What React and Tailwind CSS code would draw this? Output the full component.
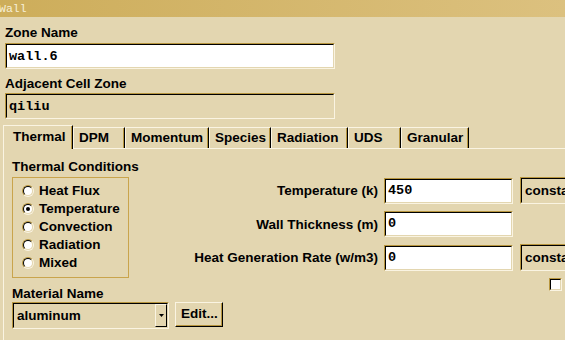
import React from "react";

const sans = { fontFamily: '"Liberation Sans", Arial, sans-serif' };
const mono = { fontFamily: '"Liberation Mono", monospace' };

function Sunken({ className = "", inner = "bg-white", children }) {
  return (
    <div className={`border border-t-[#b8963e] border-l-[#b8963e] border-b-[#faf4e2] border-r-[#faf4e2] ${className}`}>
      <div className={`h-full w-full border border-t-black border-l-black border-b-[#e3d6b0] border-r-[#e3d6b0] ${inner}`}>
        {children}
      </div>
    </div>
  );
}

function Radio({ label, checked }) {
  return (
    <div className="flex items-center h-[18px]">
      <div className="w-[12px] h-[12px] rounded-full border border-t-[#b8963e] border-l-[#b8963e] border-b-[#faf4e2] border-r-[#faf4e2]">
        <div className="w-full h-full rounded-full bg-white border border-t-black border-l-black border-b-[#e3d6b0] border-r-[#e3d6b0] flex items-center justify-center">
          {checked && <div className="w-[4px] h-[4px] rounded-full bg-black" />}
        </div>
      </div>
      <span className="ml-[5px] text-[13.5px] font-bold leading-[18px] text-black whitespace-nowrap">{label}</span>
    </div>
  );
}

const tabs = [
  { name: "DPM", w: "w-[52px]" },
  { name: "Momentum", w: "w-[84px]" },
  { name: "Species", w: "w-[62px]" },
  { name: "Radiation", w: "w-[77px]" },
  { name: "UDS", w: "w-[53px]" },
  { name: "Granular", w: "w-[68px]" },
];

function FieldRow({ label, value, combo, first }) {
  return (
    <div className={`flex items-center ${first ? "" : "mt-[7px]"}`}>
      <div className="w-[249px] text-right text-[13.5px] font-bold leading-[15px] whitespace-nowrap">{label}</div>
      <Sunken className="ml-[6px] w-[129px] h-[26px]">
        <div className="pl-[2px] pt-[3px] text-[13.5px] font-bold leading-[15px]" style={mono}>
          {value}
        </div>
      </Sunken>
      {combo && (
        <Sunken className="ml-[7px] w-[90px] h-[27px]" inner="bg-[#e3d6b0]">
          <div className="pl-[3px] pt-[4px] text-[13.5px] font-bold leading-[15px]">constant</div>
        </Sunken>
      )}
    </div>
  );
}

export default function App() {
  return (
    <div className="w-[565px] h-[340px] overflow-hidden bg-[#e3d6b0] text-black" style={sans}>
      <div className="h-[17px] bg-gradient-to-r from-[#cdad5a] to-[#dcc17f] flex items-center">
        <span className="-ml-[1px] text-[11.5px] leading-[11px] text-[#f7f0d8]" style={mono}>Wall</span>
      </div>

      <div className="px-[5px]">
        <div className="mt-[8px] text-[13.5px] font-bold leading-[15px]">Zone Name</div>
        <Sunken className="mt-[3px] w-[330px] h-[26px]">
          <div className="pl-[2px] pt-[4px] text-[13.5px] font-bold leading-[15px]" style={mono}>wall.6</div>
        </Sunken>
        <div className="mt-[7px] text-[13.5px] font-bold leading-[15px]">Adjacent Cell Zone</div>
        <Sunken className="mt-[2px] w-[330px] h-[26px]" inner="bg-[#e3d6b0]">
          <div className="pl-[2px] pt-[4px] text-[13.5px] font-bold leading-[15px]" style={mono}>qiliu</div>
        </Sunken>
      </div>

      <div className="ml-[3px] mt-[6px]">
        <div className="flex items-end h-[23px]">
          <div className="relative z-10 -mb-[1px] w-[70px] h-[24px] bg-[#e3d6b0] border-l border-t border-l-[#faf4e2] border-t-[#faf4e2] border-r border-r-black shadow-[inset_-1px_0_#b8963e] pl-[9px] pt-[3px] text-[13.5px] font-bold leading-[15px]">
            Thermal
          </div>
          {tabs.map((t) => (
            <div
              key={t.name}
              className={`${t.w} h-[21px] border-l border-t border-l-[#faf4e2] border-t-[#faf4e2] border-r border-r-black shadow-[inset_-1px_0_#b8963e] pl-[5px] pt-[2px] text-[13.5px] font-bold leading-[15px] whitespace-nowrap`}
            >
              {t.name}
            </div>
          ))}
        </div>

        <div className="border-t border-l border-[#faf4e2] pl-[8px] pt-[10px] h-[200px]">
          <div className="flex h-[119px]">
            <div className="w-[117px] shrink-0">
              <div className="text-[13.5px] font-bold leading-[15px] whitespace-nowrap">Thermal Conditions</div>
              <div className="mt-[3px] h-[101px] border border-[#c9a44c] pl-[9px] pt-[4px]">
                <Radio label="Heat Flux" />
                <Radio label="Temperature" checked />
                <Radio label="Convection" />
                <Radio label="Radiation" />
                <Radio label="Mixed" />
              </div>
            </div>
            <div className="shrink-0 pt-[18px]">
              <FieldRow first label="Temperature (k)" value="450" combo />
              <FieldRow label="Wall Thickness (m)" value="0" />
              <FieldRow label="Heat Generation Rate (w/m3)" value="0" combo />
              <Sunken className="mt-[7px] ml-[420px] w-[13px] h-[13px]" />
            </div>
          </div>

          <div className="mt-[8px] text-[13.5px] font-bold leading-[15px]">Material Name</div>
          <div className="mt-[1px] flex items-start">
            <Sunken className="w-[157px] h-[27px]" inner="bg-[#e3d6b0] flex">
              <div className="flex-1 pl-[3px] pt-[4px] text-[13.5px] font-bold leading-[15px]">aluminum</div>
              <div className="w-[12px] h-full border border-t-[#faf4e2] border-l-[#faf4e2] border-b-black border-r-black flex items-center justify-center">
                <svg width="5" height="3" viewBox="0 0 5 3">
                  <path d="M0 0h5L2.5 3z" fill="#000" />
                </svg>
              </div>
            </Sunken>
            <div className="ml-[6px] w-[48px] h-[25px] border border-t-[#faf4e2] border-l-[#faf4e2] border-b-black border-r-black shadow-[inset_-1px_-1px_#b8963e] pl-[5px] pt-[3px] text-[13.5px] font-bold leading-[15px] whitespace-nowrap">
              Edit...
            </div>
          </div>
        </div>
      </div>
    </div>
  );
}
